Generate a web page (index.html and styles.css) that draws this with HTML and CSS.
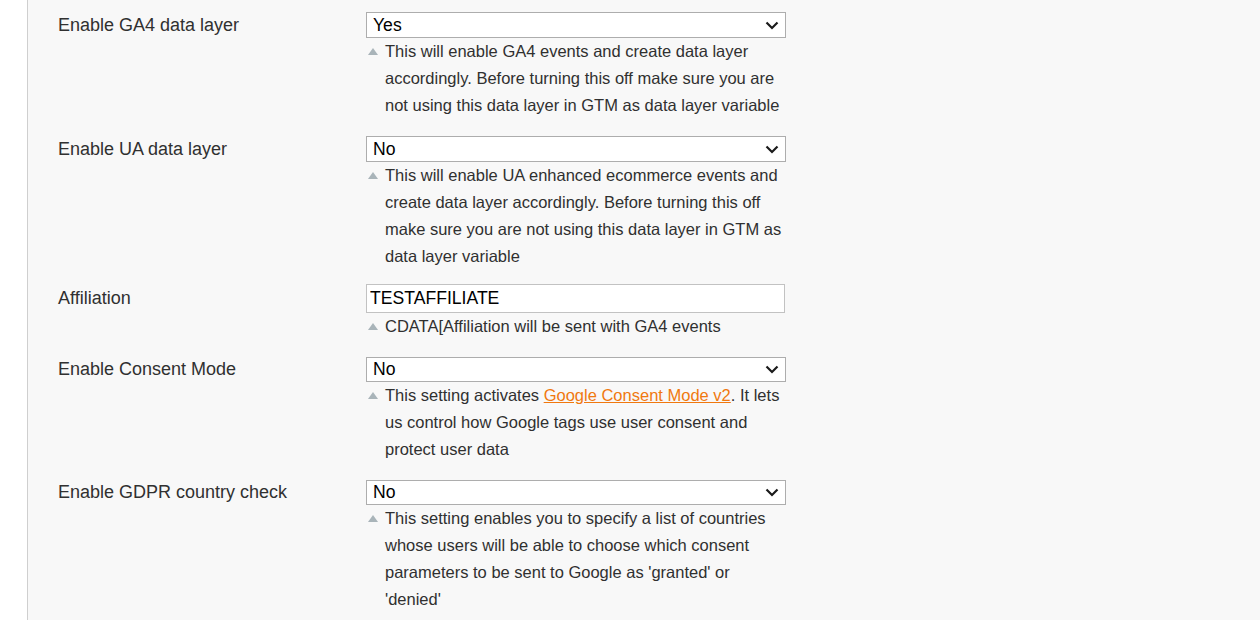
FILE: index.html
```html
<!DOCTYPE html>
<html lang="en">
<head>
<meta charset="utf-8">
<title>GA4 settings</title>
<link rel="stylesheet" href="styles.css">
</head>
<body>
<div class="page">
  <div class="side"></div>
  <main class="main">
    <div class="row">
      <div class="label">Enable GA4 data layer</div>
      <div class="value">
        <div class="select-wrap">
          <select class="select"><option>Yes</option><option>No</option></select>
          <svg class="chev" width="14" height="9" viewBox="0 0 14 9"><path d="M1.5 1.5 L7 7 L12.5 1.5" fill="none" stroke="#1a1a1a" stroke-width="2.2"/></svg>
        </div>
        <p class="note">This will enable GA4 events and create data layer accordingly. Before turning this off make sure you are not using this data layer in GTM as data layer variable</p>
      </div>
    </div>
    <div class="row">
      <div class="label">Enable UA data layer</div>
      <div class="value">
        <div class="select-wrap">
          <select class="select"><option>No</option><option>Yes</option></select>
          <svg class="chev" width="14" height="9" viewBox="0 0 14 9"><path d="M1.5 1.5 L7 7 L12.5 1.5" fill="none" stroke="#1a1a1a" stroke-width="2.2"/></svg>
        </div>
        <p class="note">This will enable UA enhanced ecommerce events and create data layer accordingly. Before turning this off make sure you are not using this data layer in GTM as data layer variable</p>
      </div>
    </div>
    <div class="row row-input">
      <div class="label label-input">Affiliation</div>
      <div class="value">
        <input class="input" type="text" value="TESTAFFILIATE">
        <p class="note">CDATA[Affiliation will be sent with GA4 events</p>
      </div>
    </div>
    <div class="row row-compact">
      <div class="label">Enable Consent Mode</div>
      <div class="value">
        <div class="select-wrap">
          <select class="select"><option>No</option><option>Yes</option></select>
          <svg class="chev" width="14" height="9" viewBox="0 0 14 9"><path d="M1.5 1.5 L7 7 L12.5 1.5" fill="none" stroke="#1a1a1a" stroke-width="2.2"/></svg>
        </div>
        <p class="note">This setting activates <a class="link" href="#">Google Consent Mode v2</a>. It lets us control how Google tags use user consent and protect user data</p>
      </div>
    </div>
    <div class="row row-compact">
      <div class="label">Enable GDPR country check</div>
      <div class="value">
        <div class="select-wrap">
          <select class="select"><option>No</option><option>Yes</option></select>
          <svg class="chev" width="14" height="9" viewBox="0 0 14 9"><path d="M1.5 1.5 L7 7 L12.5 1.5" fill="none" stroke="#1a1a1a" stroke-width="2.2"/></svg>
        </div>
        <p class="note">This setting enables you to specify a list of countries whose users will be able to choose which consent parameters to be sent to Google as 'granted' or 'denied'</p>
      </div>
    </div>
  </main>
</div>
</body>
</html>
```

FILE: styles.css
```css
html, body {
  margin: 0;
  padding: 0;
  height: 100%;
  overflow: hidden;
}

body {
  font-family: "Liberation Sans", Arial, sans-serif;
  color: #303030;
  background: #ffffff;
}

.page {
  display: flex;
  height: 100%;
}

.side {
  width: 27px;
  flex: none;
  background: #ffffff;
  border-right: 1px solid #cfcfcf;
}

.main {
  flex: 1;
  background: #f8f8f8;
  padding: 12px 0 0 30px;
  display: flex;
  flex-direction: column;
  gap: 17px;
}

.row {
  display: grid;
  grid-template-columns: 308px 420px;
  align-items: start;
}

.row-input {
  margin-top: -3px;
}

.label {
  font-size: 18px;
  line-height: 26px;
  color: #303030;
}

.label-input {
  line-height: 29px;
}

.value {
  display: flex;
  flex-direction: column;
}

.select-wrap {
  position: relative;
  height: 26px;
}

.select {
  -webkit-appearance: none;
  appearance: none;
  box-sizing: border-box;
  width: 420px;
  height: 26px;
  margin: 0;
  padding: 0 30px 0 6px;
  border: 1px solid #adadad;
  border-radius: 0;
  background: #ffffff;
  font-family: "Liberation Sans", Arial, sans-serif;
  font-size: 17.6px;
  line-height: 24px;
  color: #000000;
  outline: none;
}

.row-compact .label {
  line-height: 25px;
}

.row-compact .select-wrap,
.row-compact .select {
  height: 25px;
}

.row-compact .select {
  line-height: 23px;
}

.row-compact .chev {
  top: 8px;
}

.chev {
  position: absolute;
  right: 7px;
  top: 9px;
  pointer-events: none;
}

.input {
  box-sizing: border-box;
  width: 419px;
  height: 29px;
  margin: 0;
  padding: 0 3px;
  border: 1px solid #c2c2c2;
  border-radius: 0;
  background: #ffffff;
  font-family: "Liberation Sans", Arial, sans-serif;
  font-size: 17.6px;
  color: #000000;
  outline: none;
}

.note {
  position: relative;
  margin: 0;
  padding-left: 19px;
  font-size: 16.5px;
  line-height: 27px;
  color: #303030;
}

.note::before {
  content: "";
  position: absolute;
  left: 2px;
  top: 10px;
  width: 0;
  height: 0;
  border-left: 5px solid transparent;
  border-right: 5px solid transparent;
  border-bottom: 7px solid #a9b4b9;
}

.link {
  color: #f0780f;
  text-decoration: underline;
}
```
